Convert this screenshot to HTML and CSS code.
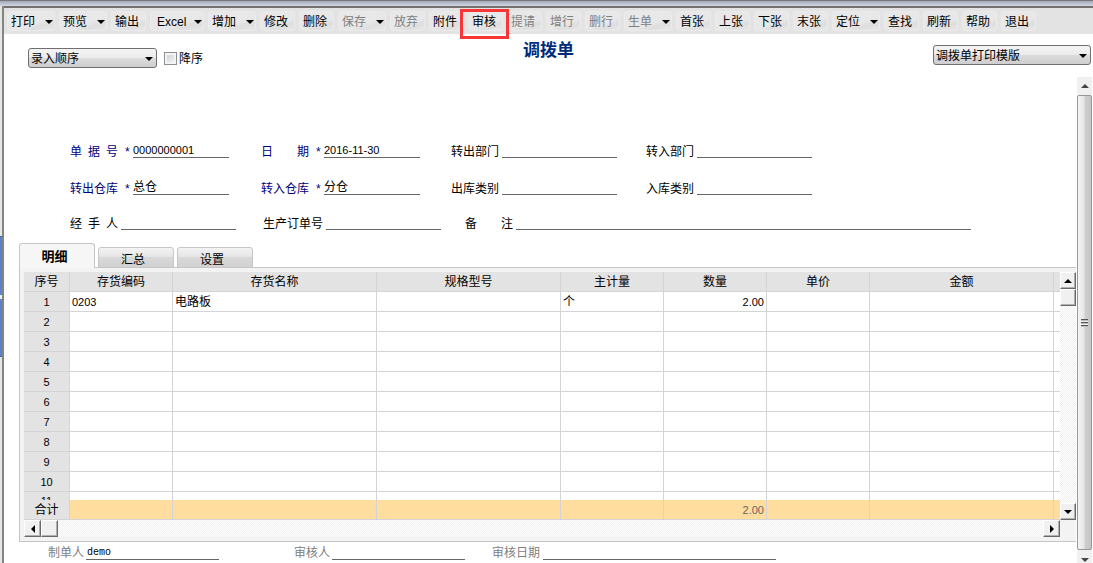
FILE: index.html
```html
<!DOCTYPE html>
<html lang="zh-CN">
<head>
<meta charset="utf-8">
<title>调拨单</title>
<link rel="stylesheet" href="styles.css">
</head>
<body>
<div class="frame-top"></div>
<div class="frame">
  <div class="gutter"><div class="splitter"></div></div>
  <main class="main">
    <nav class="toolbar">
      <button class="tool drop">打印<svg class="caret" viewBox="0 0 8 4"><path d="M0 0h8L4 4z"/></svg></button>
      <button class="tool drop">预览<svg class="caret" viewBox="0 0 8 4"><path d="M0 0h8L4 4z"/></svg></button>
      <button class="tool">输出</button>
      <button class="tool drop excel">Excel<svg class="caret" viewBox="0 0 8 4"><path d="M0 0h8L4 4z"/></svg></button>
      <button class="tool drop">增加<svg class="caret" viewBox="0 0 8 4"><path d="M0 0h8L4 4z"/></svg></button>
      <button class="tool">修改</button>
      <button class="tool">删除</button>
      <button class="tool drop off">保存<svg class="caret" viewBox="0 0 8 4"><path d="M0 0h8L4 4z"/></svg></button>
      <button class="tool off">放弃</button>
      <button class="tool">附件</button>
      <button class="tool marked">审核</button>
      <button class="tool off">提请</button>
      <button class="tool off">增行</button>
      <button class="tool off">删行</button>
      <button class="tool drop off">生单<svg class="caret" viewBox="0 0 8 4"><path d="M0 0h8L4 4z"/></svg></button>
      <button class="tool">首张</button>
      <button class="tool">上张</button>
      <button class="tool">下张</button>
      <button class="tool">末张</button>
      <button class="tool drop">定位<svg class="caret" viewBox="0 0 8 4"><path d="M0 0h8L4 4z"/></svg></button>
      <button class="tool">查找</button>
      <button class="tool">刷新</button>
      <button class="tool">帮助</button>
      <button class="tool">退出</button>
    </nav>

    <header class="heading">
      <div class="sorting">
        <span class="picker picker-sort">
          <select aria-label="排序"><option>录入顺序</option></select>
          <svg class="caret" viewBox="0 0 8 4"><path d="M0 0h8L4 4z"/></svg>
        </span>
        <input class="check" type="checkbox" id="desc"><label for="desc">降序</label>
      </div>
      <h1 class="title">调拨单</h1>
      <span class="picker picker-print">
        <select aria-label="打印模版"><option>调拨单打印模版</option></select>
        <svg class="caret" viewBox="0 0 8 4"><path d="M0 0h8L4 4z"/></svg>
      </span>
    </header>

    <div class="body">
      <div class="document">
        <form class="form">
          <div class="row">
            <div class="field required"><label for="no"><span class="cap">单 据 号</span><span class="star">*</span></label><input id="no" class="short" value="0000000001"></div>
            <div class="field required"><label for="date"><span class="cap">日 期</span><span class="star">*</span></label><input id="date" class="short" value="2016-11-30"></div>
            <div class="field"><label for="outdept"><span class="cap">转出部门</span></label><input id="outdept" class="medium"></div>
            <div class="field"><label for="indept"><span class="cap">转入部门</span></label><input id="indept" class="medium"></div>
          </div>
          <div class="row">
            <div class="field required"><label for="outwh"><span class="cap">转出仓库</span><span class="star">*</span></label><input id="outwh" class="short cjk" value="总仓"></div>
            <div class="field required"><label for="inwh"><span class="cap">转入仓库</span><span class="star">*</span></label><input id="inwh" class="short cjk" value="分仓"></div>
            <div class="field"><label for="outtype"><span class="cap">出库类别</span></label><input id="outtype" class="medium"></div>
            <div class="field"><label for="intype"><span class="cap">入库类别</span></label><input id="intype" class="medium"></div>
          </div>
          <div class="row row-last">
            <div class="field"><label for="handler"><span class="cap">经 手 人</span></label><input id="handler" class="medium"></div>
            <div class="field"><label for="order"><span class="cap wide">生产订单号</span></label><input id="order" class="medium"></div>
            <div class="field"><label for="memo"><span class="cap">备 注</span></label><input id="memo" class="long"></div>
          </div>
        </form>

        <div class="tabs" role="tablist">
          <button class="tab active" role="tab" aria-selected="true">明细</button>
          <button class="tab" role="tab">汇总</button>
          <button class="tab" role="tab">设置</button>
        </div>
        <section class="panel">
          <div class="grid">
            <table class="lines">
              <colgroup><col class="c-seq"><col class="c-std"><col class="c-name"><col class="c-spec"><col class="c-std"><col class="c-std"><col class="c-std"><col class="c-spec"><col></colgroup>
              <thead><tr><th>序号</th><th>存货编码</th><th>存货名称</th><th>规格型号</th><th>主计量</th><th>数量</th><th>单价</th><th>金额</th><th></th></tr></thead>
              <tbody>
                <tr><th>1</th><td class="code">0203</td><td>电路板</td><td></td><td>个</td><td class="num">2.00</td><td></td><td></td><td></td></tr>
                <tr><th>2</th><td></td><td></td><td></td><td></td><td></td><td></td><td></td><td></td></tr>
                <tr><th>3</th><td></td><td></td><td></td><td></td><td></td><td></td><td></td><td></td></tr>
                <tr><th>4</th><td></td><td></td><td></td><td></td><td></td><td></td><td></td><td></td></tr>
                <tr><th>5</th><td></td><td></td><td></td><td></td><td></td><td></td><td></td><td></td></tr>
                <tr><th>6</th><td></td><td></td><td></td><td></td><td></td><td></td><td></td><td></td></tr>
                <tr><th>7</th><td></td><td></td><td></td><td></td><td></td><td></td><td></td><td></td></tr>
                <tr><th>8</th><td></td><td></td><td></td><td></td><td></td><td></td><td></td><td></td></tr>
                <tr><th>9</th><td></td><td></td><td></td><td></td><td></td><td></td><td></td><td></td></tr>
                <tr><th>10</th><td></td><td></td><td></td><td></td><td></td><td></td><td></td><td></td></tr>
                <tr class="cut"><th><div class="clip">11</div></th><td></td><td></td><td></td><td></td><td></td><td></td><td></td><td></td></tr>
              </tbody>
              <tfoot><tr><th>合计</th><td></td><td></td><td></td><td></td><td class="num">2.00</td><td></td><td></td><td></td></tr></tfoot>
            </table>
            <div class="vscroll">
              <button class="sbtn" aria-label="向上"><svg viewBox="0 0 8 4"><path d="M0 4h8L4 0z"/></svg></button>
              <div class="sbtn"></div>
              <div class="space"></div>
              <button class="sbtn" aria-label="向下"><svg viewBox="0 0 8 4"><path d="M0 0h8L4 4z"/></svg></button>
            </div>
            <div class="hscroll">
              <button class="sbtn" aria-label="向左"><svg class="side" viewBox="0 0 4 8"><path d="M4 0v8L0 4z"/></svg></button>
              <div class="sbtn"></div>
              <div class="space"></div>
              <button class="sbtn" aria-label="向右"><svg class="side" viewBox="0 0 4 8"><path d="M0 0v8l4-4z"/></svg></button>
            </div>
          </div>
        </section>

        <footer class="signs">
          <div class="field sign-maker"><label for="maker">制单人</label><input id="maker" value="demo"></div>
          <div class="field sign-auditor"><label for="auditor">审核人</label><input id="auditor"></div>
          <div class="field sign-date"><label for="auditdate">审核日期</label><input id="auditdate" class="date"></div>
        </footer>
      </div>

      <div class="pagescroll">
        <div class="ps-arrow"><svg viewBox="0 0 8 4"><path d="M0 4h8L4 0z"/></svg></div>
        <div class="ps-thumb"><i class="grip"></i></div>
        <div class="ps-arrow ps-down"><svg viewBox="0 0 8 4"><path d="M0 0h8L4 4z"/></svg></div>
      </div>
    </div>
  </main>
</div>
</body>
</html>
```
FILE: styles.css
```css
* { box-sizing: border-box; }

body {
  margin: 0;
  height: 100vh;
  overflow: hidden;
  display: flex;
  flex-direction: column;
  background: #fff;
  color: #000;
  font: 12px/16px "Liberation Sans", "Noto Sans CJK SC", sans-serif;
}

button, input, select {
  font: inherit;
  color: inherit;
  margin: 0;
  padding: 0;
  border: 0;
  border-radius: 0;
  background: none;
}

svg { display: block; }

/* window frame */
.frame-top {
  height: 6px;
  flex: none;
  border-top: 1px solid #74777c;
  background: linear-gradient(#a4a9b8, #d3d7e4);
}
.frame { flex: 1; min-height: 0; display: flex; }
.gutter {
  width: 4px;
  flex: none;
  border-right: 2px solid #85857f;
  background: #e4e7e8;
  padding-top: 230px;
}
.splitter {
  height: 121px;
  background: linear-gradient(#5b82cc 58px, #e8f4fa 58px, #e8f4fa 62px, #5b82cc 62px);
  border: solid #3b62b0;
  border-width: 1px 0;
}
.main {
  flex: 1;
  min-width: 0;
  display: flex;
  flex-direction: column;
  border-top: 2px solid #71716d;
}

/* toolbar */
.toolbar {
  display: flex;
  gap: 4px;
  padding: 3px 3px;
  background: #e3e3e3;
}
.tool {
  position: relative;
  display: flex;
  align-items: center;
  justify-content: space-between;
  width: 35px;
  height: 20px;
  padding: 2px 3px 0;
  border: 1px solid #ebebeb;
  border-radius: 3px;
  white-space: nowrap;
  background: linear-gradient(160deg, #e8e8e8 60%, #dedede 75%, #e8e8e8);
}
.drop { width: 48px; padding: 2px 1px 0 3px; }
.excel { width: 54px; padding-left: 6px; }
.off { color: #808080; }
.caret { width: 8px; height: 4px; fill: #000; }
.marked { z-index: 1; }
.marked::after {
  content: "";
  position: absolute;
  inset: -3px -7px -9px -9px;
  border: 3px solid #fa3535;
}

/* title line */
.heading {
  display: grid;
  grid-template-columns: 1fr auto 1fr;
  align-items: start;
  height: 43px;
  padding: 0 2px 0 24px;
}
.sorting { display: flex; align-items: center; padding-top: 14px; }
.title {
  margin: 0;
  padding: 7px 22px 0 0;
  font-size: 17px;
  line-height: 20px;
  color: #002a7a;
}
.picker { position: relative; height: 20px; }
.picker select {
  appearance: none;
  width: 100%;
  height: 20px;
  padding: 1px 16px 0 2px;
  border: 1px solid #707070;
  border-radius: 3px;
  background: linear-gradient(#f4f4f4, #ebebeb 50%, #dcdcdc 50%, #cecece);
}
.picker .caret { position: absolute; right: 4px; top: 9px; pointer-events: none; }
.picker-sort { width: 129px; }
.picker-print { width: 158px; margin-top: 11px; justify-self: end; }
.check {
  appearance: none;
  width: 13px;
  height: 13px;
  margin: 0 2px 0 7px;
  border: 1px solid #8e8f8f;
  background: linear-gradient(135deg, #c4cad2, #fafafa);
  box-shadow: inset 0 0 0 2px #f4f4f4;
}
.sorting label { padding-top: 1px; }

/* document */
.body { flex: 1; min-height: 0; display: flex; }
.document { flex: 1; min-width: 0; padding: 0 1px 0 15px; }

.form { padding: 65px 0 11px 51px; }
.row {
  display: grid;
  grid-template-columns: 191px 190px 195px auto;
  margin-bottom: 19px;
}
.row + .row { margin-bottom: 17px; }
.row-last.row-last { grid-template-columns: 193px 202px auto; margin: 0; }
.field { display: flex; align-items: flex-start; height: 18px; }
.field label { display: flex; line-height: 20px; white-space: nowrap; }
.field input {
  height: 16px;
  border-bottom: 1px solid #666;
  outline: 0;
}
.cap { width: 48px; margin-right: 3px; text-align-last: justify; }
.cap.wide { width: 60px; }
.required label { color: #00007b; }
.required .star { width: 12px; padding-left: 4px; }
.short { width: 96px; }
.medium { width: 115px; }
.long { width: 455px; }
.required input { font-size: 11px; }
.required .cjk { font-size: 12px; }

/* tabs */
.tabs {
  display: flex;
  align-items: flex-end;
  height: 25px;
  background: linear-gradient(#c6c6c6, #c6c6c6) 76px 24px / 100% 1px no-repeat;
}
.tab {
  width: 76px;
  height: 21px;
  margin-right: 3px;
  padding: 4px 6px 0 0;
  border: 1px solid #c6c6c6;
  border-radius: 3px 3px 0 0;
  background: linear-gradient(#f4f4f4, #e4e4e4 50%, #d8d8d8 50%, #d2d2d2);
}
.tab.active {
  height: 25px;
  padding: 2px 5px 0 0;
  border-bottom: 0;
  background: #f6f6f6;
  font-size: 13px;
  font-weight: bold;
}

.panel {
  padding: 4px 0 4px 4px;
  border: solid #c6c6c6;
  border-width: 0 0 1px 1px;
  background: #f3f3f3;
}
.grid { display: grid; grid-template-columns: 1fr 16px; }

.lines {
  width: 100%;
  table-layout: fixed;
  border-collapse: separate;
  border-spacing: 0;
  background: #fff;
}
.c-seq { width: 46px; }
.c-std { width: 103px; }
.c-name { width: 204px; }
.c-spec { width: 184px; }
.lines th, .lines td {
  height: 20px;
  padding: 2px 2px 0;
  border: solid #d4d4d4;
  border-width: 0 1px 1px 0;
  line-height: 17px;
  text-align: left;
  font-weight: normal;
  white-space: nowrap;
}
.lines th { text-align: center; background: #e3e3e3; }
.lines tbody th, .lines .num, .lines .code { font-size: 11px; }
.lines th:last-child, .lines td:last-child { border-right: 0; }
.lines .num { text-align: right; }
.lines .cut th, .lines .cut td { height: 8px; padding-top: 0; border-bottom: 0; }
.clip { height: 8px; overflow: hidden; line-height: 19px; }
.lines tfoot td { background: #ffdd9e; color: #666; }

.vscroll, .hscroll {
  display: flex;
  background: repeating-conic-gradient(#f0f0f0 0 25%, #fff 0 50%) 0 0 / 2px 2px;
}
.vscroll { flex-direction: column; }
.hscroll { height: 17px; }
.space { flex: 1; }
.sbtn {
  display: flex;
  align-items: center;
  justify-content: center;
  width: 17px;
  height: 17px;
  border: 1px solid;
  border-color: #fff #696969 #696969 #fff;
  background: #f0f0f0;
  box-shadow: inset -1px -1px #b0b0b0;
}
.vscroll .sbtn { width: 16px; }
.sbtn svg { width: 8px; height: 4px; }
.sbtn .side { width: 4px; height: 8px; }

/* signatures */
.signs { display: flex; padding: 1px 0 0 29px; color: #808080; }
.signs label { width: 38px; line-height: 21px; }
.signs input {
  width: 133px;
  height: 17px;
  padding: 2px 0 0 1px;
  color: #000;
  font-family: "Liberation Mono", monospace;
  font-size: 10px;
}
.sign-maker { margin-right: 75px; }
.sign-auditor { margin-right: 27px; }
.sign-date label { width: 51px; }
.signs .date { width: 233px; }

/* page scrollbar */
.pagescroll {
  width: 15px;
  margin-right: 1px;
  display: flex;
  flex-direction: column;
  background: #f0f0f0;
}
.ps-arrow { height: 18px; display: flex; align-items: center; justify-content: center; }
.ps-down { height: 13px; align-items: flex-end; padding-bottom: 1px; }
.ps-arrow svg { width: 8px; height: 4px; fill: #444; }
.ps-thumb {
  flex: 1;
  display: flex;
  align-items: center;
  justify-content: center;
  border: 1px solid #979797;
  border-radius: 2px;
  background: linear-gradient(90deg, #f5f5f5, #e6e6e6 45%, #cfcfd2 55%, #c4c4c8);
}
.grip {
  width: 7px;
  height: 8px;
  background: repeating-linear-gradient(#555 0 1px, #bbb 1px 2px, #eee 2px 3px);
}
```
